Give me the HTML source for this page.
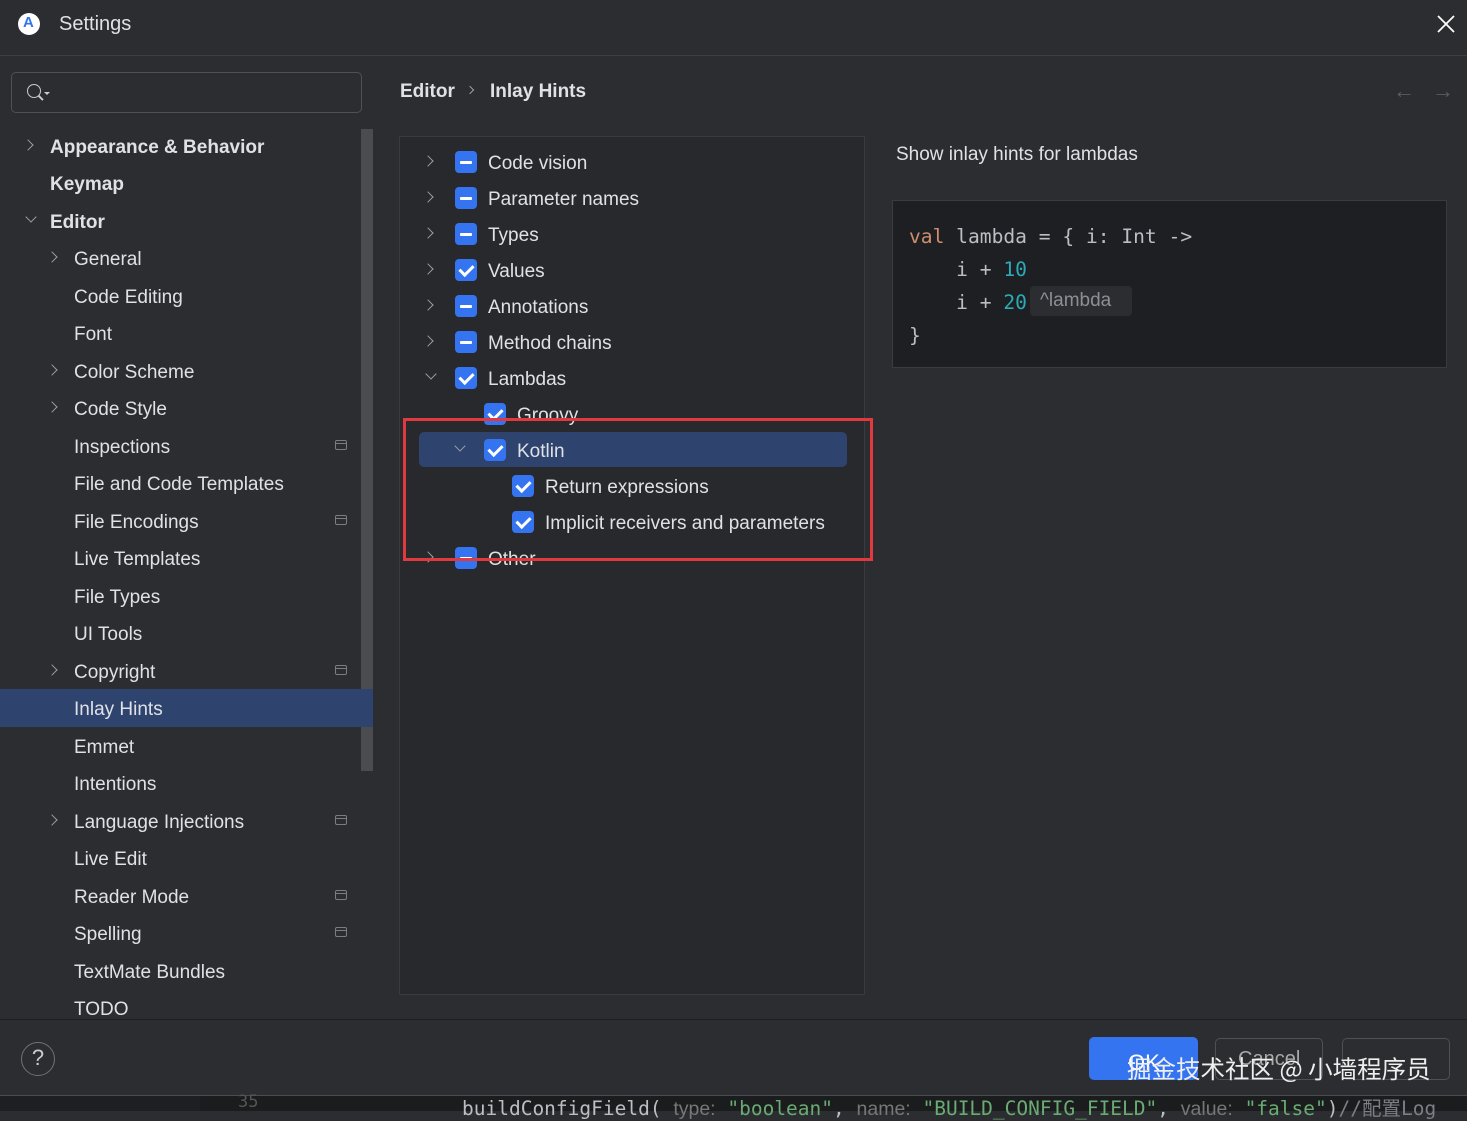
<!DOCTYPE html>
<html><head><meta charset="utf-8"><style>
*{margin:0;padding:0;box-sizing:border-box}
body{width:1467px;height:1111px;background:#2b2d30;font-family:"Liberation Sans","Noto Sans CJK SC",sans-serif;color:#dfe1e5;position:relative;overflow:hidden}
.a{position:absolute;white-space:nowrap}
.s{font-size:19px;line-height:22px;margin-top:2px}
.b{font-weight:bold}
.chev{position:absolute;width:8px;height:8px;border-right:1.5px solid #9a9da3;border-bottom:1.5px solid #9a9da3}
.r{transform:rotate(-45deg)}
.d{transform:rotate(45deg)}
.cb{position:absolute;width:22px;height:22px;background:#3574f0;border-radius:4px}
.cb.m::after{content:"";position:absolute;left:5px;top:9.5px;width:12px;height:3px;background:#fff;border-radius:1px}
.cb.c::after{content:"";position:absolute;left:7px;top:3px;width:6px;height:11px;border-right:3px solid #fff;border-bottom:3px solid #fff;transform:rotate(45deg)}
.ic{position:absolute;left:335px;width:12px;height:10px;border:1.5px solid #7a7d82;border-radius:2px}
.ic::after{content:"";position:absolute;left:0;right:0;top:2px;border-top:1.5px solid #7a7d82}
.mono{font-family:"DejaVu Sans Mono","Liberation Mono",monospace}
</style></head><body>
<!-- title bar -->
<div class="a" style="left:18px;top:13px;width:22px;height:22px;border-radius:50%;background:#fff"></div>
<div class="a" style="left:23px;top:14px;font-size:15px;color:#3574f0;font-weight:bold">A</div>
<div class="a" style="left:59px;top:13px;font-size:20px;color:#dfe1e5">Settings</div>
<svg class="a" style="left:1437px;top:15px" width="18" height="18" viewBox="0 0 18 18"><path d="M1 1L17 17M17 1L1 17" stroke="#fff" stroke-width="1.8"/></svg>
<div class="a" style="left:0;top:55px;width:1467px;height:1px;background:#3c3f43"></div>
<!-- search -->
<div class="a" style="left:11px;top:72px;width:351px;height:41px;border:1px solid #4e5157;border-radius:5px"></div>
<div class="a" style="left:27px;top:84px;width:14px;height:14px;border:1.5px solid #ccc;border-radius:50%"></div>
<div class="a" style="left:38px;top:97px;width:6px;height:1.5px;background:#ccc;transform:rotate(45deg)"></div>
<div class="a" style="left:44px;top:92px;border-left:3px solid transparent;border-right:3px solid transparent;border-top:3px solid #ccc"></div>
<!-- scrollbar -->
<div class="a" style="left:361px;top:129px;width:12px;height:642px;background:#4a4c50"></div>
<!-- sidebar selection -->
<div class="a" style="left:0;top:689px;width:373px;height:38px;background:#2e436e"></div>
<!-- sidebar items -->
<div class="chev r" style="left:24px;top:141px"></div>
<div class="a s b" style="left:50px;top:135px">Appearance &amp; Behavior</div>
<div class="a s b" style="left:50px;top:172px">Keymap</div>
<div class="chev d" style="left:27px;top:213px"></div>
<div class="a s b" style="left:50px;top:210px">Editor</div>
<div class="chev r" style="left:48px;top:253px"></div>
<div class="a s" style="left:74px;top:247px">General</div>
<div class="a s" style="left:74px;top:285px">Code Editing</div>
<div class="a s" style="left:74px;top:322px">Font</div>
<div class="chev r" style="left:48px;top:366px"></div>
<div class="a s" style="left:74px;top:360px">Color Scheme</div>
<div class="chev r" style="left:48px;top:403px"></div>
<div class="a s" style="left:74px;top:397px">Code Style</div>
<div class="a s" style="left:74px;top:435px">Inspections</div><div class="ic" style="top:440px"></div>
<div class="a s" style="left:74px;top:472px">File and Code Templates</div>
<div class="a s" style="left:74px;top:510px">File Encodings</div><div class="ic" style="top:515px"></div>
<div class="a s" style="left:74px;top:547px">Live Templates</div>
<div class="a s" style="left:74px;top:585px">File Types</div>
<div class="a s" style="left:74px;top:622px">UI Tools</div>
<div class="chev r" style="left:48px;top:666px"></div>
<div class="a s" style="left:74px;top:660px">Copyright</div><div class="ic" style="top:665px"></div>
<div class="a s" style="left:74px;top:697px">Inlay Hints</div>
<div class="a s" style="left:74px;top:735px">Emmet</div>
<div class="a s" style="left:74px;top:772px">Intentions</div>
<div class="chev r" style="left:48px;top:816px"></div>
<div class="a s" style="left:74px;top:810px">Language Injections</div><div class="ic" style="top:815px"></div>
<div class="a s" style="left:74px;top:847px">Live Edit</div>
<div class="a s" style="left:74px;top:885px">Reader Mode</div><div class="ic" style="top:890px"></div>
<div class="a s" style="left:74px;top:922px">Spelling</div><div class="ic" style="top:927px"></div>
<div class="a s" style="left:74px;top:960px">TextMate Bundles</div>
<div class="a s" style="left:74px;top:997px">TODO</div>
<!-- breadcrumb -->
<div class="a s b" style="left:400px;top:79px">Editor</div>
<div class="chev r" style="left:467px;top:87px;width:6px;height:6px"></div>
<div class="a s b" style="left:490px;top:79px">Inlay Hints</div>
<div class="a" style="left:1393px;top:78px;font-size:22px;color:#5a5d62">←</div>
<div class="a" style="left:1432px;top:78px;font-size:22px;color:#5a5d62">→</div>
<!-- middle panel -->
<div class="a" style="left:399px;top:136px;width:466px;height:859px;background:#27292c;border:1px solid #393b40"></div>
<div class="a" style="left:419px;top:432px;width:428px;height:35px;background:#2e436e;border-radius:5px"></div>
<div class="chev r" style="left:424px;top:157px"></div><div class="cb m" style="left:455px;top:151px"></div><div class="a s" style="left:488px;top:151px">Code vision</div>
<div class="chev r" style="left:424px;top:193px"></div><div class="cb m" style="left:455px;top:187px"></div><div class="a s" style="left:488px;top:187px">Parameter names</div>
<div class="chev r" style="left:424px;top:229px"></div><div class="cb m" style="left:455px;top:223px"></div><div class="a s" style="left:488px;top:223px">Types</div>
<div class="chev r" style="left:424px;top:265px"></div><div class="cb c" style="left:455px;top:259px"></div><div class="a s" style="left:488px;top:259px">Values</div>
<div class="chev r" style="left:424px;top:301px"></div><div class="cb m" style="left:455px;top:295px"></div><div class="a s" style="left:488px;top:295px">Annotations</div>
<div class="chev r" style="left:424px;top:337px"></div><div class="cb m" style="left:455px;top:331px"></div><div class="a s" style="left:488px;top:331px">Method chains</div>
<div class="chev d" style="left:427px;top:370px"></div><div class="cb c" style="left:455px;top:367px"></div><div class="a s" style="left:488px;top:367px">Lambdas</div>
<div class="cb c" style="left:484px;top:403px"></div><div class="a s" style="left:517px;top:403px">Groovy</div>
<div class="chev d" style="left:456px;top:442px"></div><div class="cb c" style="left:484px;top:439px"></div><div class="a s" style="left:517px;top:439px">Kotlin</div>
<div class="cb c" style="left:512px;top:475px"></div><div class="a s" style="left:545px;top:475px">Return expressions</div>
<div class="cb c" style="left:512px;top:511px"></div><div class="a s" style="left:545px;top:511px">Implicit receivers and parameters</div>
<div class="chev r" style="left:424px;top:553px"></div><div class="cb m" style="left:455px;top:547px"></div><div class="a s" style="left:488px;top:547px">Other</div>
<div class="a" style="left:403px;top:418px;width:470px;height:143px;border:3px solid #e0393e"></div>
<!-- right -->
<div class="a s" style="left:896px;top:142px">Show inlay hints for lambdas</div>
<div class="a" style="left:892px;top:200px;width:555px;height:168px;background:#1e1f22;border:1px solid #393b40"></div>
<div class="a mono" style="left:909px;top:220px;font-size:19.6px;line-height:33px;color:#bcbec4;white-space:pre"><span style="color:#cf8e6d">val</span> lambda = { i: Int ->
    i + <span style="color:#2aacb8">10</span>
    i + <span style="color:#2aacb8">20</span>
}</div>
<div class="a" style="left:1030px;top:286px;width:102px;height:30px;background:#2b2d30;border-radius:4px;color:#8c8f94;font-size:19px;line-height:30px;padding-left:10px">^lambda</div>
<!-- footer -->
<div class="a" style="left:0;top:1019px;width:1467px;height:1px;background:#1e1f22"></div>
<div class="a" style="left:21px;top:1042px;width:34px;height:34px;border:1.5px solid #6f7277;border-radius:50%;text-align:center;font-size:22px;line-height:30px;color:#ccc">?</div>
<div class="a" style="left:1089px;top:1037px;width:109px;height:43px;background:#3574f0;border-radius:5px"></div>
<div class="a" style="left:1215px;top:1038px;width:108px;height:42px;border:1px solid #4e5157;border-radius:5px"></div>
<div class="a" style="left:1342px;top:1038px;width:108px;height:42px;border:1px solid #4e5157;border-radius:5px"></div>
<div class="a" style="left:1128px;top:1050px;font-size:22px;color:#fff">OK</div>
<div class="a" style="left:1238px;top:1048px;font-size:20px;color:#aaa">Cancel</div>
<div class="a" style="left:1127px;top:1051px;font-size:24.5px;color:#eee;font-family:'Noto Sans CJK SC',sans-serif">掘金技术社区 @ 小墙程序员</div>
<!-- editor strip -->
<div class="a" style="left:0;top:1095px;width:1467px;height:16px;background:#1e1f22"></div>
<div class="a" style="left:0;top:1095px;width:1467px;height:1px;background:#4a4c50"></div>
<div class="a" style="left:200px;top:1096px;width:1267px;height:15px;background:#1b1c1e"></div>
<div class="a mono" style="left:238px;top:1092px;font-size:17px;color:#555">35</div>
<div class="a mono" style="left:462px;top:1092px;font-size:19.5px;color:#bcbec4">buildConfigField( <span style="color:#777;font-family:'Liberation Sans'">type:</span> <span style="color:#6aab73">"boolean"</span>,  <span style="color:#777;font-family:'Liberation Sans'">name:</span> <span style="color:#6aab73">"BUILD_CONFIG_FIELD"</span>,  <span style="color:#777;font-family:'Liberation Sans'">value:</span> <span style="color:#6aab73">"false"</span>)<span style="color:#7a7e85">//配置Log</span></div>
</body></html>
